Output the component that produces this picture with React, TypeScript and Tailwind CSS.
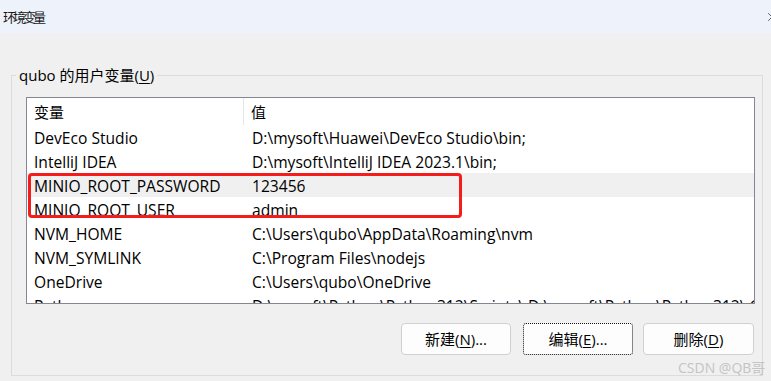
import { X } from "lucide-react";

const rows = [
  { name: "DevEco Studio", value: "D:\\mysoft\\Huawei\\DevEco Studio\\bin;" },
  { name: "IntelliJ IDEA", value: "D:\\mysoft\\IntelliJ IDEA 2023.1\\bin;" },
  { name: "MINIO_ROOT_PASSWORD", value: "123456", selected: true },
  { name: "MINIO_ROOT_USER", value: "admin" },
  { name: "NVM_HOME", value: "C:\\Users\\qubo\\AppData\\Roaming\\nvm" },
  { name: "NVM_SYMLINK", value: "C:\\Program Files\\nodejs" },
  { name: "OneDrive", value: "C:\\Users\\qubo\\OneDrive" },
  {
    name: "Path",
    value:
      "D:\\mysoft\\Python\\Python312\\Scripts\\;D:\\mysoft\\Python\\Python312\\;C:\\Users\\qubo\\AppData\\Local\\Microsoft\\WindowsApps;",
  },
];

const font = "font-['Open_Sans','Noto_Sans_CJK_SC',sans-serif]";

export default function App() {
  return (
    <div
      className={`relative w-[771px] h-[381px] overflow-hidden bg-[#f0f0f0] text-black ${font}`}
    >
      {/* Title bar */}
      <div className="h-[33px] bg-[#eef2fa] flex items-center pl-[3px]">
        <span className="text-[13px] tracking-[-3px] text-[#1a1a1a] font-['Noto_Sans_CJK_SC',sans-serif]">
          环境变量
        </span>
        <X className="ml-auto mr-[-8px] w-[14px] h-[14px] text-[#222]" strokeWidth={1.2} />
      </div>

      {/* Group box */}
      <fieldset className="ml-[11px] mt-[32px] w-[752px] border border-[#dcdcdc] pb-[20px]">
        <legend className="ml-[4px] px-[3px] text-[15px] leading-[20px]">
          qubo 的用户变量(<span className="underline underline-offset-2">U</span>)
        </legend>

        {/* List view */}
        <div className="relative ml-[14px] mt-[12px] w-[729px] h-[207px] border border-[#828790] bg-white flex overflow-hidden">
          <div className="flex-1 flex flex-col text-[15.6px] leading-[24px]">
            <div className="h-[27px] flex shrink-0 text-[15px]">
              <div className="w-[217px] pl-[7px] flex items-center border-r border-[#e5e5e5]">
                变量
              </div>
              <div className="flex-1 pl-[7px] flex items-center border-r border-[#e5e5e5]">
                值
              </div>
            </div>
            {rows.map((row) => (
              <div
                key={row.name}
                className={`h-[24px] shrink-0 flex whitespace-nowrap pt-[1px] ${
                  row.selected ? "bg-[#f0f0f0]" : ""
                }`}
              >
                <div className="w-[217px] pl-[7px] overflow-hidden">{row.name}</div>
                <div className="flex-1 min-w-0 pl-[8px] pr-[24px] truncate">{row.value}</div>
              </div>
            ))}
          </div>

          {/* Scrollbar */}
          <div className="w-[20px] shrink-0 bg-[#f0f0f0] pt-[22px] pl-[7px]">
            <div className="w-[6px] h-[113px] bg-[#858585]" />
          </div>

          {/* Highlight box */}
          <div className="absolute left-[1px] top-[75px] w-[434px] h-[45px] border-[3px] border-[#f51c1c] rounded-[4px]" />
        </div>

        {/* Buttons */}
        <div className="mt-[19px] flex justify-end pr-[8px] text-[15px]">
          <button className="w-[110px] h-[32px] bg-[#fdfdfd] border border-[#d0d0d0] rounded-[4px]">
            新建(<span className="underline underline-offset-2">N</span>)...
          </button>
          <button className="ml-[12px] w-[110px] h-[32px] bg-[#fdfdfd] border border-dotted border-[#111] rounded-[3px]">
            编辑(<span className="underline underline-offset-2">E</span>)...
          </button>
          <button className="ml-[10px] w-[111px] h-[32px] bg-[#fdfdfd] border border-[#d0d0d0] rounded-[4px]">
            删除(<span className="underline underline-offset-2">D</span>)
          </button>
        </div>
      </fieldset>

      {/* Watermark */}
      <div className="absolute left-[678px] top-[357px] text-[14px] text-[#c4c4c4]">
        CSDN @QB哥
      </div>
    </div>
  );
}
